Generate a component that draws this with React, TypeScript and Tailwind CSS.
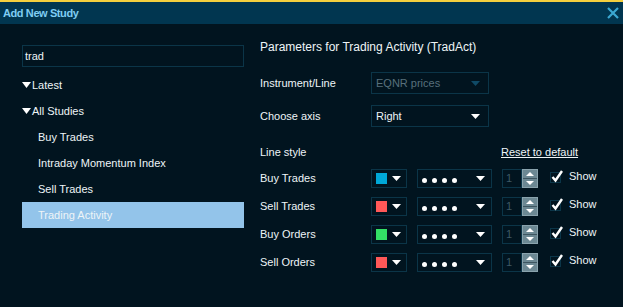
import React from 'react';

const font = { fontFamily: '"Liberation Sans", Arial, sans-serif' };

const Caret = ({ color = '#ffffff' }: { color?: string }) => (
    <svg width="9" height="5" viewBox="0 0 9 5">
        <path d="M0 0 H9 L4.5 5 Z" fill={color} />
    </svg>
);

const ColorPick = ({ color }: { color: string }) => (
    <div className="w-[36px] h-[19px] border border-[#0b3548] flex items-center pl-[4px] pr-[5px] justify-between">
        <div className="w-[11px] h-[11px]" style={{ backgroundColor: color }} />
        <Caret />
    </div>
);

const DotPick = () => (
    <div className="w-[75px] h-[19px] border border-[#0b3548] flex items-center pl-[4px] pr-[6px] justify-between">
        <div className="flex gap-[5px] mt-[5px]">
            {[0, 1, 2, 3].map((i) => (
                <div key={i} className="w-[5px] h-[5px] rounded-full bg-white" />
            ))}
        </div>
        <Caret />
    </div>
);

const Spinner = () => (
    <div className="flex h-[19px]">
        <div className="w-[20px] h-full border border-[#0b3548] text-[#3e5965] text-[11px] flex items-center pl-[3px]">1</div>
        <div className="w-[16px] h-full bg-[#6c8893] border border-[#8aa3ad] flex flex-col">
            <div className="flex-1 flex items-center justify-center border-b border-[#3e5661]">
                <svg width="8" height="4" viewBox="0 0 8 4"><path d="M0 4 H8 L4 0 Z" fill="#fff" /></svg>
            </div>
            <div className="flex-1 flex items-center justify-center">
                <svg width="8" height="4" viewBox="0 0 8 4"><path d="M0 0 H8 L4 4 Z" fill="#fff" /></svg>
            </div>
        </div>
    </div>
);

const Check = () => (
    <div className="relative w-[11px] h-[11px] border border-[#0b3548]">
        <svg className="absolute -top-[3px] left-[0px]" width="13" height="13" viewBox="0 0 13 13">
            <path d="M1.5 7 L4.5 10.5 L11 1" stroke="#fff" strokeWidth="2.4" fill="none" />
        </svg>
    </div>
);

const studies = ['Buy Trades', 'Intraday Momentum Index', 'Sell Trades', 'Trading Activity'];

const lines = [
    { name: 'Buy Trades', color: '#00a8d8' },
    { name: 'Sell Trades', color: '#ff5858' },
    { name: 'Buy Orders', color: '#33e066' },
    { name: 'Sell Orders', color: '#ff5858' },
];

export default function App() {
    return (
        <div className="w-[623px] h-[307px] bg-[#01141f] border-t-2 border-[#f4cf3e] flex flex-col text-[11px] text-[#eef4f7] overflow-hidden" style={font}>
            {/* title bar */}
            <div className="h-[22px] bg-[#013650] flex items-center justify-between pl-[3px] pr-[4px]">
                <span className="text-[11px] font-bold text-[#7fcdf3] tracking-[-0.4px]">Add New Study</span>
                <svg width="12" height="12" viewBox="0 0 12 12">
                    <path d="M1 1 L11 11 M11 1 L1 11" stroke="#3ba8d2" strokeWidth="2.2" />
                </svg>
            </div>

            <div className="flex flex-1">
                {/* study list */}
                <div className="w-[222px] ml-[22px] mt-[21px] flex flex-col">
                    <div className="h-[22px] border border-[#0b3548] flex items-center pl-[2px] text-[11px]">trad</div>
                    <div className="mt-[5px] flex flex-col">
                        {['Latest', 'All Studies'].map((g) => (
                            <div key={g} className="h-[26px] flex items-center">
                                <svg width="9" height="6" viewBox="0 0 9 6" className="mr-[1px]"><path d="M0 0 H9 L4.5 6 Z" fill="#fff" /></svg>
                                {g}
                            </div>
                        ))}
                        {studies.map((s) => (
                            <div
                                key={s}
                                className={`h-[26px] flex items-center pl-[16px] ${s === 'Trading Activity' ? 'bg-[#93c4ea]' : ''}`}
                            >
                                {s}
                            </div>
                        ))}
                    </div>
                </div>

                {/* parameters */}
                <div className="ml-[16px] flex flex-col">
                    <div className="mt-[15px] h-[16px] flex items-center text-[12px]">Parameters for Trading Activity (TradAct)</div>
                    <div className="mt-[17px] flex items-center">
                        <div className="w-[111px]">Instrument/Line</div>
                        <div className="w-[118px] h-[22px] border border-[#0b3548] flex items-center justify-between pl-[4px] pr-[8px] text-[#58707c]">
                            EQNR prices
                            <Caret color="#0f4a66" />
                        </div>
                    </div>
                    <div className="mt-[11px] flex items-center">
                        <div className="w-[111px]">Choose axis</div>
                        <div className="w-[118px] h-[22px] border border-[#0b3548] flex items-center justify-between pl-[4px] pr-[8px]">
                            Right
                            <Caret />
                        </div>
                    </div>
                    <div className="mt-[17px] h-[16px] flex items-center">
                        <div className="w-[241px]">Line style</div>
                        <span className="underline">Reset to default</span>
                    </div>
                    <div className="mt-[4px] flex flex-col">
                        {lines.map((l) => (
                            <div key={l.name} className="h-[28px] flex items-center">
                                <div className="w-[111px]">{l.name}</div>
                                <ColorPick color={l.color} />
                                <div className="ml-[10px]"><DotPick /></div>
                                <div className="ml-[10px]"><Spinner /></div>
                                <div className="ml-[12px] mb-[1px]"><Check /></div>
                                <span className="ml-[8px] -mt-[3px]">Show</span>
                            </div>
                        ))}
                    </div>
                </div>
            </div>
        </div>
    );
}
